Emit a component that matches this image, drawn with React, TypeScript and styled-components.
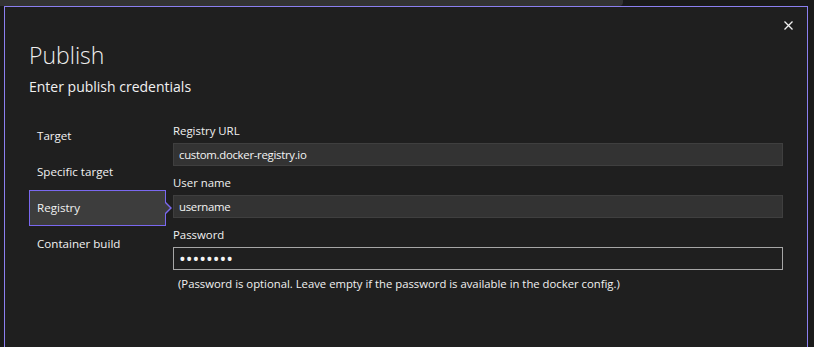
import React from 'react';
import styled, { createGlobalStyle } from 'styled-components';

const Global = createGlobalStyle`
  html, body { margin: 0; padding: 0; background: #1a1a1a; }
  body { font-family: "Open Sans", "Noto Sans", sans-serif; color: #f1f1f1; }
  * { box-sizing: border-box; }
`;

const Page = styled.div`
  display: flex;
  flex-direction: column;
  height: 347px;
  overflow: hidden;
`;

const TopStrip = styled.div`
  display: flex;
  height: 6px;
  flex-shrink: 0;
`;

const HostTab = styled.div`
  width: 623px;
  background: #333333;
  border-bottom-right-radius: 4px;
`;

const Dialog = styled.div`
  flex: 1;
  margin: 0 6px 0 4px;
  border: 1px solid #8b7ff0;
  border-bottom: none;
  background: #1f1f1f;
  display: flex;
  flex-direction: column;
`;

const Header = styled.div`
  display: flex;
  justify-content: space-between;
  align-items: flex-start;
  padding: 0 14px 0 24px;
`;

const TitleBlock = styled.div`
  padding-top: 32px;
`;

const Title = styled.h1`
  margin: 0;
  font-size: 23px;
  line-height: 32px;
  font-weight: 300;
  color: #eeeeee;
`;

const Subtitle = styled.div`
  margin-top: 6px;
  font-size: 14px;
  line-height: 20px;
  color: #f1f1f1;
`;

const CloseButton = styled.button`
  margin-top: 13px;
  width: 10px;
  height: 10px;
  padding: 0;
  border: none;
  background: transparent;
  display: flex;
  align-items: center;
  justify-content: center;
  cursor: pointer;
`;

const Body = styled.div`
  display: flex;
  margin-top: 21px;
  padding: 0 24px 0 24px;
  gap: 7px;
`;

const Sidebar = styled.nav`
  width: 137px;
  flex-shrink: 0;
  display: flex;
  flex-direction: column;
`;

const NavItem = styled.div<{ $active?: boolean }>`
  position: relative;
  height: 36px;
  line-height: 34px;
  padding-left: 7px;
  font-size: 11.6px;
  color: #f1f1f1;
  border: 1px solid ${(p) => (p.$active ? '#7a68f0' : 'transparent')};
  background: ${(p) => (p.$active ? '#3d3d3d' : 'transparent')};
  ${(p) =>
    p.$active &&
    `
    &::before, &::after {
      content: '';
      position: absolute;
      top: 50%;
      width: 0;
      height: 0;
      border-style: solid;
      border-color: transparent;
    }
    &::before {
      right: -7px;
      margin-top: -6px;
      border-width: 6px 0 6px 6px;
      border-left-color: #7a68f0;
    }
    &::after {
      right: -5px;
      margin-top: -5px;
      border-width: 5px 0 5px 5px;
      border-left-color: #3d3d3d;
    }
  `}
`;

const Fields = styled.div`
  flex: 1;
  display: flex;
  flex-direction: column;
  padding-top: 4px;
`;

const Label = styled.label`
  display: block;
  font-size: 11.4px;
  line-height: 18px;
  color: #f1f1f1;
`;

const Input = styled.input<{ $outlined?: boolean }>`
  display: block;
  width: 100%;
  height: 23px;
  margin: 3px 0 8px 0;
  padding: 0 5px;
  font-family: inherit;
  font-size: ${(p) => (p.$outlined ? '18px' : '11.4px')};
  letter-spacing: ${(p) => (p.$outlined ? '0' : '-0.3px')};
  color: #f4f4f4;
  background: ${(p) => (p.$outlined ? '#1f1f1f' : '#333333')};
  border: 1px solid ${(p) => (p.$outlined ? '#a6a6a6' : '#3f3f3f')};
  border-radius: 0;
  outline: none;
`;

const Note = styled.div`
  margin-top: -3px;
  padding-left: 5px;
  font-size: 11.3px;
  line-height: 18px;
  color: #f1f1f1;
`;

export default function App() {
  return (
    <>
      <Global />
      <Page>
        <TopStrip>
          <HostTab />
        </TopStrip>
        <Dialog>
          <Header>
            <TitleBlock>
              <Title>Publish</Title>
              <Subtitle>Enter publish credentials</Subtitle>
            </TitleBlock>
            <CloseButton aria-label="Close">
              <svg width="9" height="9" viewBox="0 0 9 9">
                <path d="M0.5 0.5 L8.5 8.5 M8.5 0.5 L0.5 8.5" stroke="#f1f1f1" strokeWidth="1.3" />
              </svg>
            </CloseButton>
          </Header>
          <Body>
            <Sidebar>
              <NavItem>Target</NavItem>
              <NavItem>Specific target</NavItem>
              <NavItem $active>Registry</NavItem>
              <NavItem>Container build</NavItem>
            </Sidebar>
            <Fields>
              <Label>Registry URL</Label>
              <Input readOnly defaultValue="custom.docker-registry.io" />
              <Label>User name</Label>
              <Input readOnly defaultValue="username" />
              <Label>Password</Label>
              <Input readOnly $outlined type="password" defaultValue="password" />
              <Note>(Password is optional. Leave empty if the password is available in the docker config.)</Note>
            </Fields>
          </Body>
        </Dialog>
      </Page>
    </>
  );
}
